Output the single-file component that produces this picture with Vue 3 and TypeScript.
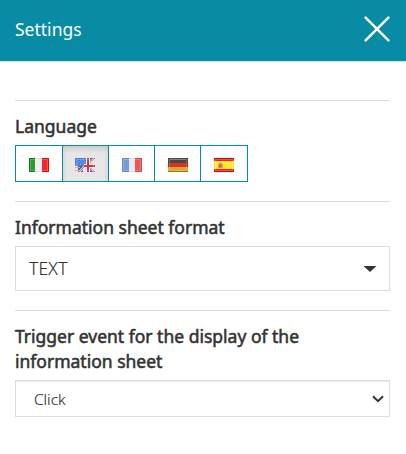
<script setup lang="ts">
import { ref } from 'vue'

interface Language {
  code: string
  name: string
}

const languages: Language[] = [
  { code: 'it', name: 'Italiano' },
  { code: 'en', name: 'English' },
  { code: 'fr', name: 'Français' },
  { code: 'de', name: 'Deutsch' },
  { code: 'es', name: 'Español' },
]
const selected = ref('en')
</script>

<template>
  <main class="panel">
    <header class="header">
      <h1 class="title">Settings</h1>
      <button class="close" type="button" aria-label="Close">
        <svg width="26" height="26" viewBox="0 0 26 26">
          <path d="M1.6 1.6 24.4 24.4M24.4 1.6 1.6 24.4" stroke="#fff" stroke-width="2.5" stroke-linecap="round" />
        </svg>
      </button>
    </header>

    <div class="body">
      <section class="group">
        <h2 class="label">Language</h2>
        <div class="languages">
          <button
            v-for="lang in languages"
            :key="lang.code"
            type="button"
            class="language"
            :class="{ active: lang.code === selected }"
            :aria-label="lang.name"
            @click="selected = lang.code"
          >
            <svg class="flag" width="20" height="14" viewBox="0 0 20 14">
              <template v-if="lang.code === 'it'">
                <rect width="7" height="14" fill="#2d9a31" />
                <rect x="6" width="8" height="14" fill="#efefef" />
                <rect x="13" width="7" height="14" fill="#f3282b" />
                <path d="M6 .5H.5v13H6" fill="none" stroke="#087e0c" />
                <path d="M13 .5h6.5v13H13" fill="none" stroke="#f00000" />
                <path d="M6 .5h7M6 13.5h7" stroke="#dcdcdc" />
              </template>
              <template v-else-if="lang.code === 'en'">
                <rect width="20" height="14" fill="#e6dfe8" />
                <path d="M10 0h10L4 14H3V8h7zM14 9l6 5h-6zM8 9v5H5z" fill="#4d5fae" />
                <rect width="11" height="8" fill="#4b80dc" />
                <path d="M2 2h1m2 0h1m2 0h1M3 4h1m2 0h1m2 0h1M2 6h1m2 0h1m2 0h1" stroke="#8fb4ef" />
                <path d="M0 9.5h5M0 12.5h3" stroke="#e39a9b" />
                <path d="m20 0-7 6M13 8l7 6M10 8l-6 6" stroke="#f5f1f6" stroke-width="2" />
                <path d="m20 0-7 6M13 8l7 6M10 8l-6 6" stroke="#d9535b" />
                <path d="M9 8h11M13 0v14" stroke="#f4edf1" stroke-width="4" />
                <path d="M9 8h11M13 0v14" stroke="#d8343b" stroke-width="2" />
              </template>
              <template v-else-if="lang.code === 'fr'">
                <rect width="7" height="14" fill="#7898d8" />
                <rect x="7" width="7" height="14" fill="#e9e9ec" />
                <rect x="13" width="7" height="14" fill="#ea5558" />
                <path d="M7 .5H.5v13H7" fill="none" stroke="#6687cb" />
                <path d="M13 .5h6.5v13H13" fill="none" stroke="#d94649" />
                <path d="M7 .5h6M7 13.5h6" stroke="#d6d6d9" />
              </template>
              <template v-else-if="lang.code === 'de'">
                <rect width="20" height="5" fill="#4a483c" />
                <rect y="5" width="20" height="5" fill="#e52c29" />
                <rect y="9" width="20" height="5" fill="#d5a92f" />
                <path d="M1.5 1.5h17" stroke="#66645a" />
                <path d="M.5 5v4M19.5 5v4" stroke="#982b20" />
                <path d="M0 13.5h20" stroke="#94771e" />
              </template>
              <template v-else>
                <rect width="20" height="14" fill="#ec2428" />
                <rect y="3" width="20" height="8" fill="#fbea2e" />
                <path d="M0 .5h20M0 13.5h20" stroke="#d90509" />
                <path d="M4 6h1v4H4zM8 6h1v4H8z" fill="#d5a65b" />
                <rect x="5" y="5" width="3" height="5" fill="#e28452" />
                <path d="M5 7h2v2H5z" fill="#c76254" />
              </template>
              <rect x="1.5" y="1.5" width="17" height="11" fill="none" stroke="#fff" stroke-opacity=".2" />
            </svg>
          </button>
        </div>
      </section>

      <section class="group">
        <h2 class="label">Information sheet format</h2>
        <div class="field format" role="combobox" aria-expanded="false" tabindex="0">
          <span>TEXT</span>
          <svg width="14" height="6" viewBox="0 0 14 6"><path d="M.5 0h13L7 6z" fill="#333" /></svg>
        </div>
      </section>

      <section class="group">
        <h2 class="label">Trigger event for the display of the information sheet</h2>
        <div class="field trigger" role="combobox" aria-expanded="false" tabindex="0">
          <span>Click</span>
          <svg width="12" height="8" viewBox="0 0 12 8">
            <path d="m1 1.2 5 5 5-5" fill="none" stroke="#333" stroke-width="2" />
          </svg>
        </div>
      </section>
    </div>
  </main>
</template>

<style>
body {
  background: #fff;
}
</style>

<style scoped>
.panel {
  height: 454px;
  font-family: 'Noto Sans', sans-serif;
  color: #333;
  background: #fff;
}
.header {
  display: flex;
  align-items: center;
  justify-content: space-between;
  box-sizing: border-box;
  height: 62px;
  padding: 0 16px 3px 15px;
  background: #088ba5;
  border-bottom: 1px solid #d5e6e9;
}
.title {
  margin: 0;
  font-size: 17.5px;
  font-weight: 400;
  line-height: 25px;
  color: #fff;
}
.close {
  display: flex;
  padding: 0;
  border: 0;
  background: none;
}
.body {
  padding: 38px 16px 0 15px;
}
.group {
  padding-top: 13px;
  margin-bottom: 19px;
  border-top: 1px solid #ddd;
}
.label {
  margin: 0 0 6px;
  font-size: 17.5px;
  font-weight: 400;
  line-height: 25px;
  -webkit-text-stroke: 0.55px #333;
}
.languages {
  display: flex;
}
.language {
  display: flex;
  align-items: center;
  justify-content: center;
  box-sizing: border-box;
  width: 47px;
  height: 37px;
  margin-left: -1px;
  padding: 3px 0 0 1px;
  border: 1px solid #088ba5;
  background: #fff;
}
.language:first-child {
  width: 48px;
  margin-left: 0;
  padding-left: 0;
}
.language:last-child {
  width: 48px;
  padding-left: 0;
}
.language.active {
  padding: 3px 1px 0 0;
  background: #e6e6e6;
  box-shadow: inset 0 3px 5px rgba(0, 0, 0, 0.125);
}
.field {
  display: flex;
  align-items: center;
  justify-content: space-between;
  box-sizing: border-box;
  border: 1px solid #ddd;
  font-weight: 300;
}
.format {
  height: 45px;
  padding: 0 12px 0 13px;
  font-size: 17.5px;
}
.format span {
  padding-bottom: 2px;
  letter-spacing: 0.2px;
  -webkit-text-stroke: 0.15px #333;
}
.trigger {
  height: 37px;
  padding: 0 5px 0 18px;
  font-size: 15.3px;
  box-shadow: inset 0 1px 1px rgba(0, 0, 0, 0.075);
}
.trigger span {
  -webkit-text-stroke: 0.15px #333;
}
</style>
